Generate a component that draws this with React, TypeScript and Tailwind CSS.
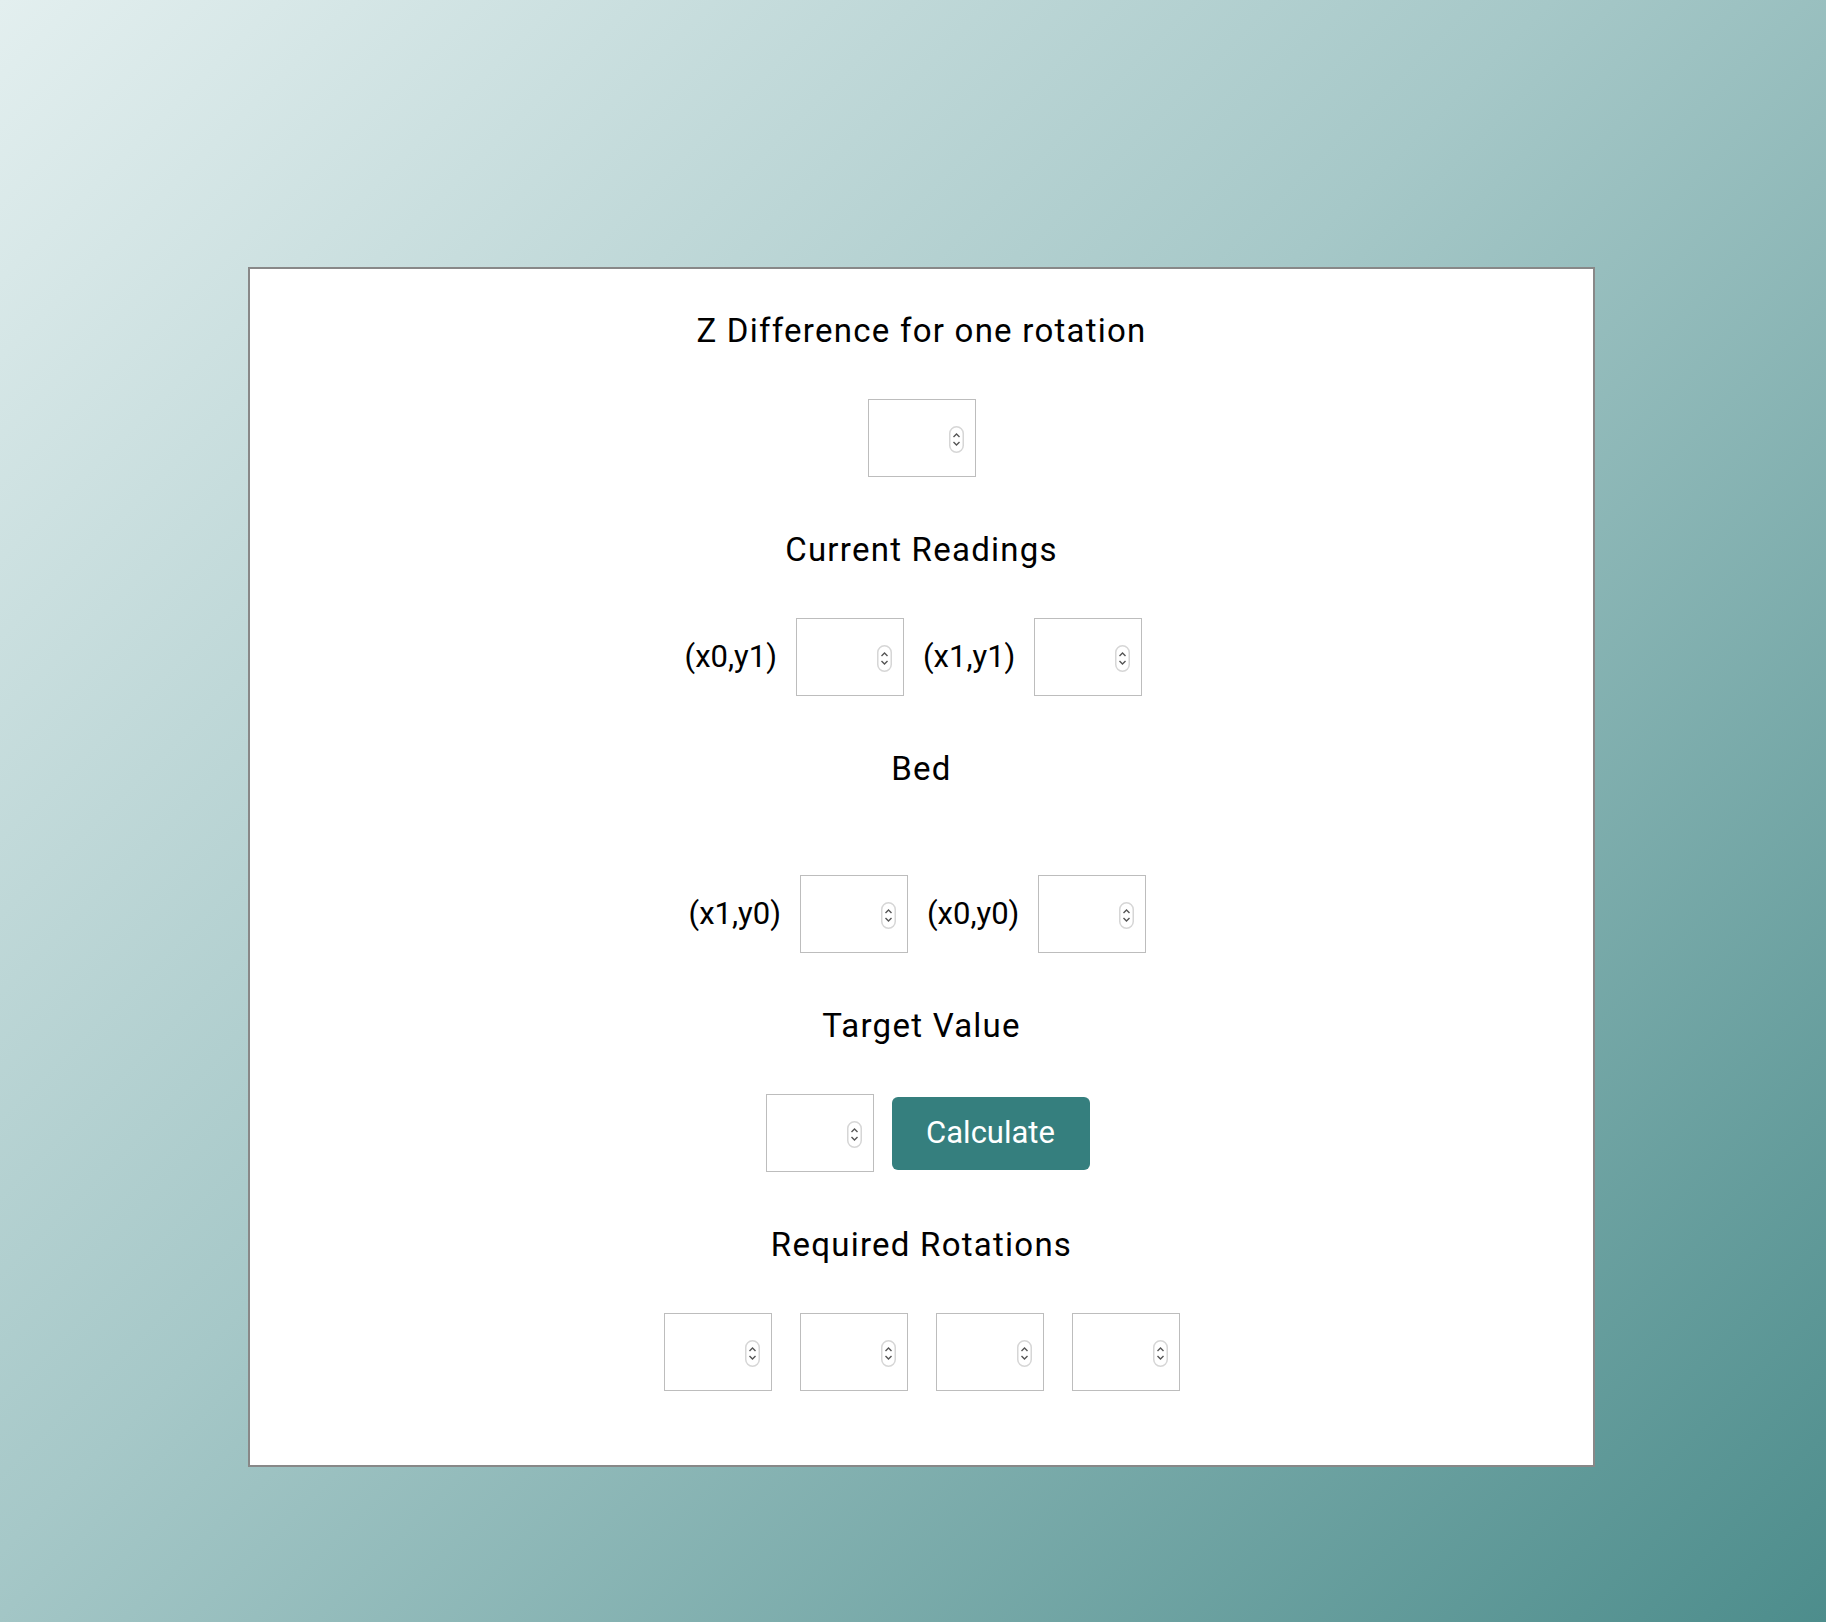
import React from 'react';

const font = { fontFamily: 'Roboto, "Noto Sans", sans-serif' };

const Spinner = () => (
  <svg
    width="15"
    height="27"
    viewBox="0 0 15 27"
    className="pointer-events-none absolute right-[12px] top-[27px]"
  >
    <rect x="0.75" y="0.75" width="13.5" height="25.5" rx="6.75" fill="#fff" stroke="#d6d6d6" strokeWidth="1.5" />
    <path d="M4.5 11 L7.5 8 L10.5 11" fill="none" stroke="#555" strokeWidth="1.4" />
    <path d="M4.5 16 L7.5 19 L10.5 16" fill="none" stroke="#555" strokeWidth="1.4" />
  </svg>
);

const NumberBox = () => (
  <div className="relative w-[108px] h-[78px]">
    <input
      type="number"
      className="w-full h-full border border-[#bdbdbd] bg-white px-2 text-[28px] outline-none appearance-none [appearance:textfield] [&::-webkit-inner-spin-button]:appearance-none [&::-webkit-outer-spin-button]:appearance-none"
    />
    <Spinner />
  </div>
);

const Heading = ({ children }: { children: React.ReactNode }) => (
  <h2 className="text-[33px] leading-[40px] tracking-[1.25px] text-black text-center">{children}</h2>
);

const Label = ({ children }: { children: React.ReactNode }) => (
  <span className="text-[31px] leading-[40px] text-black">{children}</span>
);

export default function App() {
  return (
    <div
      className="min-h-[1622px] w-full pt-[267px] bg-[linear-gradient(135deg,#e3efef_0%,#a6c8c8_45%,#4d8d8c_100%)]"
      style={font}
    >
      <div className="ml-[248px] w-[1347px] h-[1200px] border-2 border-[#888888] bg-white pt-[42px] flex flex-col items-center">
        <Heading>Z Difference for one rotation</Heading>
        <div className="mt-[48px]">
          <NumberBox />
        </div>

        <div className="mt-[53px]">
          <Heading>Current Readings</Heading>
        </div>
        <div className="mt-[48px] flex items-center gap-[19px] pr-[16px]">
          <Label>(x0,y1)</Label>
          <NumberBox />
          <Label>(x1,y1)</Label>
          <NumberBox />
        </div>

        <div className="mt-[53px]">
          <Heading>Bed</Heading>
        </div>
        <div className="mt-[86px] flex items-center gap-[19px] pr-[8px]">
          <Label>(x1,y0)</Label>
          <NumberBox />
          <Label>(x0,y0)</Label>
          <NumberBox />
        </div>

        <div className="mt-[53px]">
          <Heading>Target Value</Heading>
        </div>
        <div className="mt-[48px] flex items-center gap-[18px] pl-[12px]">
          <NumberBox />
          <button className="w-[198px] h-[73px] rounded-[6px] bg-[#357f7e] text-white text-[31px]">
            Calculate
          </button>
        </div>

        <div className="mt-[53px]">
          <Heading>Required Rotations</Heading>
        </div>
        <div className="mt-[48px] flex items-center gap-[28px]">
          <NumberBox />
          <NumberBox />
          <NumberBox />
          <NumberBox />
        </div>
      </div>
    </div>
  );
}
